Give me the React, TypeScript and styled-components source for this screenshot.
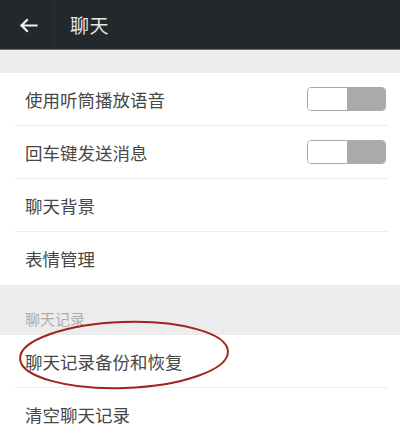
import React, { FC } from 'react';
import styled, { createGlobalStyle } from 'styled-components';

const GlobalStyle = createGlobalStyle`
  html, body {
    margin: 0;
    padding: 0;
    background: #ffffff;
  }
  body {
    font-family: 'Noto Sans CJK SC', 'Noto Sans', sans-serif;
  }
`;

type RowProps = {
  title: string;
  toggle?: boolean;
  divider?: boolean;
};

const SettingRow: FC<RowProps> = ({ title, toggle, divider = true }) => (
  <Row>
    <RowInner className={divider ? 'with-divider' : ''}>
      <RowTitle>{title}</RowTitle>
      {toggle && (
        <Toggle>
          <span className='knob' />
          <span className='track' />
        </Toggle>
      )}
    </RowInner>
  </Row>
);

const App: FC = () => {
  return (
    <>
      <GlobalStyle />
      <Page>
        <Header>
          <BackButton>
            <svg width='19' height='15' viewBox='0 0 19 15' fill='none'>
              <path
                d='M17.5 7.5H2.5M8 2L2.5 7.5L8 13'
                stroke='#f2f2f2'
                strokeWidth='2.2'
                strokeLinecap='square'
              />
            </svg>
          </BackButton>
          <HeaderTitle>聊天</HeaderTitle>
        </Header>
        <Spacer />
        <SettingRow title='使用听筒播放语音' toggle />
        <SettingRow title='回车键发送消息' toggle />
        <SettingRow title='聊天背景' />
        <SettingRow title='表情管理' divider={false} />
        <SectionHeader>聊天记录</SectionHeader>
        <SettingRow title='聊天记录备份和恢复' />
        <SettingRow title='清空聊天记录' divider={false} />
        <Mark viewBox='0 0 216 74' width='216' height='74'>
          <ellipse
            cx='108'
            cy='37'
            rx='104'
            ry='33'
            fill='none'
            stroke='#a3221c'
            strokeWidth='2'
            transform='rotate(-2 108 37)'
          />
        </Mark>
      </Page>
    </>
  );
};

export default App;

const Page = styled.div`
  position: relative;
  width: 400px;
  height: 443px;
  overflow: hidden;
  background: #ffffff;
`;

const Header = styled.div`
  display: flex;
  align-items: center;
  height: 50px;
  background: #22282b;
  border-bottom: 1px solid #6b6f71;
  box-sizing: border-box;
`;

const BackButton = styled.div`
  display: flex;
  align-items: center;
  justify-content: center;
  width: 55px;
  height: 100%;
  border-right: 1px solid #2c3235;
  box-sizing: border-box;
  padding: 2px 0 0 3px;
`;

const HeaderTitle = styled.div`
  padding-left: 15px;
  color: #e6e6e6;
  font-size: 19px;
  letter-spacing: 0.5px;
`;

const Spacer = styled.div`
  height: 23px;
  background: #ececec;
`;

const Row = styled.div`
  height: 53px;
  background: #ffffff;
`;

const RowInner = styled.div`
  display: flex;
  align-items: center;
  justify-content: space-between;
  height: 100%;
  margin: 0 12px 0 15px;
  padding: 0 2px 0 10px;
  box-sizing: border-box;
  &.with-divider {
    border-bottom: 1px solid #ececec;
  }
`;

const RowTitle = styled.div`
  color: #474747;
  font-size: 17.5px;
`;

const Toggle = styled.div`
  display: flex;
  width: 79px;
  height: 24px;
  border: 1.5px solid #a9aba8;
  border-radius: 4px;
  box-sizing: border-box;
  overflow: hidden;
  .knob {
    flex: 0 0 39px;
    background: #ffffff;
  }
  .track {
    flex: 1;
    background: #a9aba8;
  }
`;

const SectionHeader = styled.div`
  display: flex;
  align-items: flex-end;
  height: 50px;
  padding: 0 0 6px 25px;
  box-sizing: border-box;
  background: #ececec;
  color: #acacac;
  font-size: 15px;
`;

const Mark = styled.svg`
  position: absolute;
  left: 16px;
  top: 318px;
  pointer-events: none;
`;
